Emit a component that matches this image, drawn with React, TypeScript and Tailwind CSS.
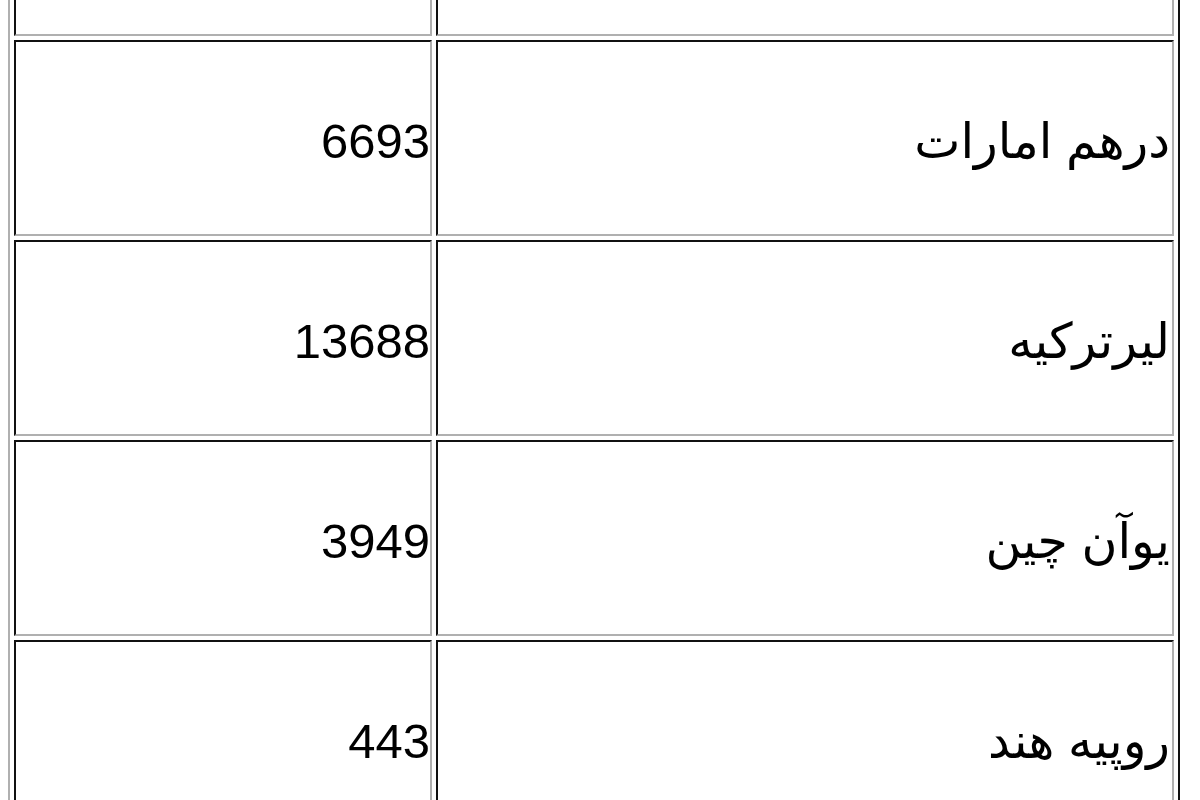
const rows = [
  { name: "", value: "" },
  { name: "درهم امارات", value: "6693" },
  { name: "لیرترکیه", value: "13688" },
  { name: "یوآن چین", value: "3949" },
  { name: "روپیه هند", value: "443" },
];

export default function App() {
  return (
    <div className="h-[800px] w-[1200px] overflow-hidden bg-white">
      <table
        dir="rtl"
        className="ml-[8px] -mt-[166px] border-separate border-spacing-[4px] border-2 border-t-[#b0b0b0] border-l-[#b0b0b0] border-b-[#111] border-r-[#111] text-[49px] text-black [font-family:'Liberation_Sans','DejaVu_Sans',sans-serif]"
      >
        <tbody>
          {rows.map((row, i) => (
            <tr key={i} className="h-[196px]">
              <td className="w-[738px] border-2 border-t-[#111] border-l-[#111] border-b-[#b0b0b0] border-r-[#b0b0b0] pt-[8px] pr-[2px] text-right align-middle">
                {row.name}
              </td>
              <td className="w-[418px] border-2 border-t-[#111] border-l-[#111] border-b-[#b0b0b0] border-r-[#b0b0b0] pt-[8px] pr-[0px] text-right align-middle">
                {row.value}
              </td>
            </tr>
          ))}
        </tbody>
      </table>
    </div>
  );
}
